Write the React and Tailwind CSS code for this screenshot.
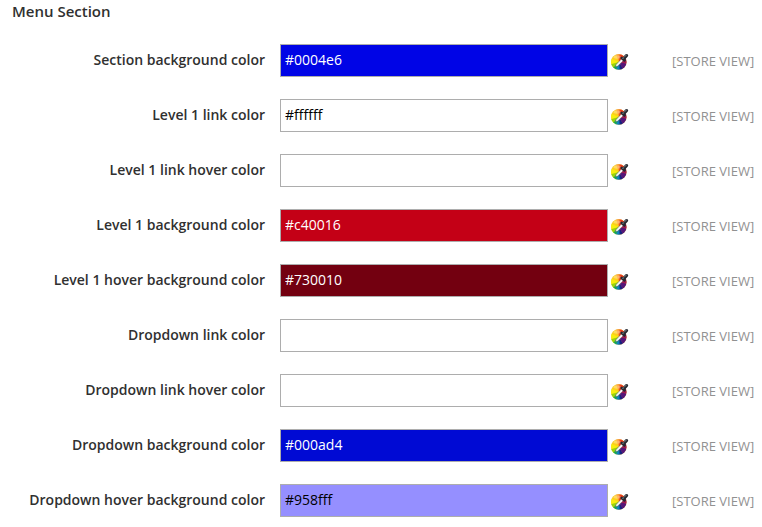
const fields = [
  { id: 'section-bg', label: 'Section background color', value: '#0004e6', tone: 'bg-[#0004e6] text-white' },
  { id: 'level1-link', label: 'Level 1 link color', value: '#ffffff', tone: 'bg-white text-black' },
  { id: 'level1-link-hover', label: 'Level 1 link hover color', value: '', tone: 'bg-white text-black' },
  { id: 'level1-bg', label: 'Level 1 background color', value: '#c40016', tone: 'bg-[#c40016] text-white' },
  { id: 'level1-hover-bg', label: 'Level 1 hover background color', value: '#730010', tone: 'bg-[#730010] text-white' },
  { id: 'dropdown-link', label: 'Dropdown link color', value: '', tone: 'bg-white text-black' },
  { id: 'dropdown-link-hover', label: 'Dropdown link hover color', value: '', tone: 'bg-white text-black' },
  { id: 'dropdown-bg', label: 'Dropdown background color', value: '#000ad4', tone: 'bg-[#000ad4] text-white' },
  { id: 'dropdown-hover-bg', label: 'Dropdown hover background color', value: '#958fff', tone: 'bg-[#958fff] text-black' },
];

function PickerIcon({ id }) {
  const clip = `${id}-disc`;
  const soft = `${id}-soft`;
  return (
    <svg width="18" height="18" viewBox="0 0 18 18" aria-hidden="true">
      <defs>
        <clipPath id={clip}>
          <circle cx="7.8" cy="9" r="7.8" />
        </clipPath>
        <filter id={soft} x="-20%" y="-20%" width="140%" height="140%">
          <feGaussianBlur stdDeviation="0.6" />
        </filter>
      </defs>
      <g clipPath={`url(#${clip})`}>
        <rect width="18" height="18" fill="#e0c030" />
        <g filter={`url(#${soft})`}>
          <path d="M8 9 L-3 5 L-3 -4 L4 -4 Z" fill="#ffcc1c" />
          <path d="M8 9 L3 -4 L10 -4 Z" fill="#ff9428" />
          <path d="M8 9 L9 -4 L20 -4 L20 2 Z" fill="#ec3c1c" />
          <path d="M8 9 L-3 4 L-3 13 Z" fill="#f8ec08" />
          <path d="M8 9 L-3 12 L-3 19 L0 19 Z" fill="#98d410" />
          <path d="M8 9 L-1 18 L5 20 Z" fill="#18a858" />
          <path d="M8 9 L4 20 L10 20 Z" fill="#0c80c0" />
          <path d="M8 9 L9 20 L15 20 Z" fill="#142480" />
          <path d="M8 9 L14 20 L20 20 L20 11 Z" fill="#541478" />
          <path d="M8 9 L20 12 L20 1 Z" fill="#a01450" />
        </g>
        <ellipse cx="6" cy="4" rx="3.6" ry="1.7" fill="#fff" opacity="0.3" />
      </g>
      <path d="M4.4 13.8 L5.2 11.4 L10.4 6 L12.2 7.8 L6.8 13 Z" fill="#f6f6f6" stroke="#444" strokeWidth="0.4" />
      <path d="M9 5 L10.6 3.5 L12.2 3.9 L14.2 1.6 Q15.8 0.4 16.9 1.5 Q17.7 2.7 16.6 3.8 L14.5 5.9 L14.9 7.5 L13.4 9.1 Z" fill="#25282e" />
      <path d="M11.6 5.2 L12.8 4.9 M13.8 3.6 L15.4 2" stroke="#9aa0a8" strokeWidth="0.8" strokeLinecap="round" />
    </svg>
  );
}

function ColorRow({ id, label, value, tone }) {
  return (
    <div className="flex items-center">
      <label htmlFor={id} className="w-[265px] shrink-0 pb-0.5 text-right text-sm font-semibold text-[#303030]">
        {label}
      </label>
      <input
        id={id}
        type="text"
        defaultValue={value}
        className={`ml-[15px] h-[33px] min-w-0 grow border border-[#adadad] px-1 pb-0.5 text-sm outline-none ${tone}`}
      />
      <button type="button" aria-label={`Pick ${label}`} className="ml-[3px] w-[18px] shrink-0 pt-0.5">
        <PickerIcon id={id} />
      </button>
      <span className="ml-[43px] w-[90px] shrink-0 pt-0.5 text-[13px] text-[#919191]">[STORE VIEW]</span>
    </div>
  );
}

export default function App() {
  return (
    <main className="bg-white pb-2.5 font-['Open_Sans',sans-serif]">
      <h2 className="px-3 pt-px text-[15px] leading-5 font-semibold text-[#303030]">Menu Section</h2>
      <form className="mt-[23px] flex flex-col gap-[22px]">
        {fields.map((field) => (
          <ColorRow key={field.id} {...field} />
        ))}
      </form>
    </main>
  );
}
